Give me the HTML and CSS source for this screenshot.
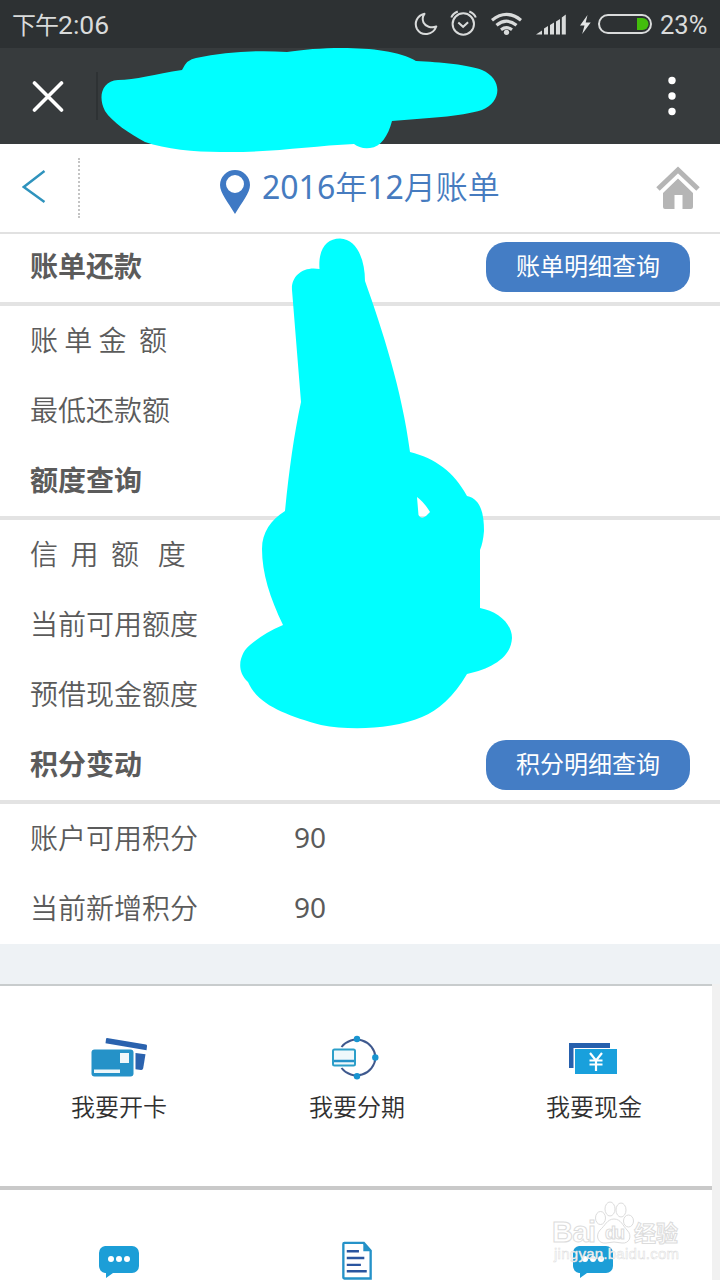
FILE: index.html
```html
<!DOCTYPE html>
<html lang="zh-CN">
<head>
<meta charset="utf-8">
<title>账单</title>
<link rel="stylesheet" href="styles.css">
</head>
<body>
<div class="screen">
  <header class="status">
    <div class="clock"><span class="ampm">下午</span>2:06</div>
    <svg class="status-icons" width="246" height="48" viewBox="410 0 246 48" fill="none" stroke="#d9dbdb" stroke-width="2">
      <path d="M424.500 13.800C417 15.500 413.800 23 417 29C421.500 36.500 433 35.500 436.300 26.500C431 28.500 425.500 26.500 423.500 22.500C422.200 19.500 422.500 16.500 424.500 13.800Z" stroke-linejoin="round"/>
      <circle cx="463.300" cy="24" r="10.700"/>
      <path d="M458.300 22.500l4.800 4.300l5-4.600M451.300 17.500q1.500-4 6.500-6M475.800 17.500q-1.500-4-6.500-6"/>
      <g stroke-width="3.200"><path d="M492 20.200q14.500-11.500 29 0M496.500 25.200q10-8 20 0M501 29.700q5.500-4 11 0"/></g>
      <circle cx="506.500" cy="32.300" r="2.600" fill="#d9dbdb" stroke="none"/>
      <path d="M536 34.500l6-4v4zM544 28.500l4-2.500v8.500h-4zM550 25l4-2.500v12h-4zM556 21.500l4-2.500v15.500h-4zM561.800 17.500l4-3v20h-4z" fill="#d9dbdb" stroke="none"/>
      <path d="M587.500 15l-7.500 10.500h4.500l-2.300 8.500l8.500-11.500h-5z" fill="#e4e6e6" stroke="none"/>
      <rect x="599" y="15" width="52" height="18" rx="9"/>
      <path d="M637 18h5.500a6 6 0 0 1 0 12h-5.500z" fill="#43bd0c" stroke="none"/>
    </svg>
    <div class="percent">23%</div>
  </header>

  <div class="titlebar">
    <svg class="close" width="32" height="32" viewBox="0 0 32 32" stroke="#fff" stroke-width="3.600" stroke-linecap="round"><path d="M2.500 3L29.500 30M29.500 3L2.500 30"/></svg>
    <i class="title-divider"></i>
    <svg class="more" width="8" height="40" viewBox="0 0 8 40" fill="#fff"><circle cx="4" cy="4.500" r="3.700"/><circle cx="4" cy="20" r="3.700"/><circle cx="4" cy="35.500" r="3.700"/></svg>
  </div>

  <nav class="nav">
    <svg class="back" width="24" height="34" viewBox="0 0 24 34" fill="none" stroke="#2f93bd" stroke-width="2.400"><path d="M22.500 1L1.800 17L22.500 32"/></svg>
    <i class="nav-divider"></i>
    <div class="nav-title">
      <svg width="30" height="44" viewBox="0 0 30 44"><path fill="#3f79c4" fill-rule="evenodd" d="M15 0a15 15 0 0 1 15 15c0 8-8 17-15 29C8 32 0 23 0 15A15 15 0 0 1 15 0zM15 5a9 9 0 1 0 0 18a9 9 0 0 0 0-18z"/></svg>
      <span class="month"><b>2016</b>年<b>12</b>月账单</span>
    </div>
    <svg class="home" width="44" height="44" viewBox="0 0 44 44"><path d="M2 23L22 4L42 23" fill="none" stroke="#b5b5b5" stroke-width="5"/><path d="M22 12.500L37 27v14q0 2-2 2h-8.500V29h-8v14H9q-2 0-2-2V27z" fill="#b5b5b5"/></svg>
  </nav>

  <main class="bill">
    <section>
      <h2 class="head head-first"><span>账单还款</span><a class="button">账单明细查询</a></h2>
      <div class="row"><span class="label">账 单 金&nbsp; 额</span></div>
      <div class="row"><span class="label">最低还款额</span></div>
    </section>
    <section>
      <h2 class="head"><span>额度查询</span></h2>
      <div class="row"><span class="label">信&nbsp; 用&nbsp; 额&nbsp;&nbsp; 度</span></div>
      <div class="row"><span class="label">当前可用额度</span></div>
      <div class="row"><span class="label">预借现金额度</span></div>
    </section>
    <section>
      <h2 class="head"><span>积分变动</span><a class="button">积分明细查询</a></h2>
      <div class="row"><span class="label">账户可用积分</span><span class="value">90</span></div>
      <div class="row"><span class="label">当前新增积分</span><span class="value">90</span></div>
    </section>
  </main>

  <div class="band"></div>

  <div class="menu">
    <div class="item">
      <svg width="60" height="50" viewBox="89 1030 60 50"><path d="M107 1038l39 6.500q1.200.3 1 1.800l-.5 4l-41-7l.5-4q.2-1.400 1-1.300z" fill="#2a62ae"/><path d="M135.500 1053l10 1.300l-2.300 14q-.4 2-2.200 1.800l-5.500-.8z" fill="#2a62ae"/><rect x="91.500" y="1049.500" width="42" height="27" rx="3" fill="#2592c8"/><path d="M120 1053h9v10h-9zM94 1069.500h26v3.500H94z" fill="#eef7fa"/></svg>
      <span>我要开卡</span>
    </div>
    <div class="item">
      <svg width="60" height="50" viewBox="327 1030 60 50" fill="none"><path d="M341.500 1047A19 19 0 0 1 375.500 1057.500A19 19 0 0 1 341.500 1068" stroke="#3f598e" stroke-width="2"/><rect x="333" y="1049.500" width="22" height="16" rx="1.500" fill="#eff8fb" stroke="#2c9fc9" stroke-width="2"/><path d="M334 1061h20" stroke="#2592c8" stroke-width="2.500"/><g fill="#1894d0"><circle cx="357" cy="1039" r="3.200"/><circle cx="375.300" cy="1057.500" r="3.200"/><circle cx="357" cy="1076.200" r="3.200"/></g></svg>
      <span>我要分期</span>
    </div>
    <div class="item">
      <svg width="60" height="50" viewBox="564 1030 60 50"><path d="M569 1043h41v5h-36.500v20H569z" fill="#2660ad"/><path d="M575 1049h42v25h-42z" fill="#19a0dc"/><path d="M590 1053l6 7.500l6-7.500M589.500 1060.500h13M589.500 1064.500h13M596 1060v11" fill="none" stroke="#fff" stroke-width="2.200"/></svg>
      <span>我要现金</span>
    </div>
    <div class="item second">
      <svg width="42" height="34" viewBox="0 0 42 34"><path d="M7 1h27a7 7 0 0 1 7 7v13a7 7 0 0 1-7 7H15l-7 5v-5H7a7 7 0 0 1-6-7V8a7 7 0 0 1 6-7z" fill="#1c9ed7"/><g fill="#fff"><circle cx="13" cy="14" r="3"/><circle cx="21" cy="14" r="3"/><circle cx="29" cy="14" r="3"/></g></svg>
    </div>
    <div class="item second">
      <svg class="doc" width="32" height="40" viewBox="0 0 32 40"><path d="M3 2h20l7 8v28.500H3q-1 0-1-1V3q0-1 1-1z" fill="#fff" stroke="#2592c8" stroke-width="2.400"/><path d="M22.500 1.500v9H31z" fill="#2592c8"/><path d="M5.500 10.500H18M5.500 17.500h18M5.500 24.500h14.500M5.500 31h20.500" stroke="#2a559f" stroke-width="2.500"/></svg>
    </div>
    <div class="item second last">
      <svg width="42" height="34" viewBox="0 0 42 34"><path d="M7 1h27a7 7 0 0 1 7 7v13a7 7 0 0 1-7 7H15l-7 5v-5H7a7 7 0 0 1-6-7V8a7 7 0 0 1 6-7z" fill="#1c9ed7"/><g fill="#fff"><circle cx="13" cy="14" r="3"/><circle cx="21" cy="14" r="3"/><circle cx="29" cy="14" r="3"/></g></svg>
    </div>
  </div>

  <svg class="overlay" width="720" height="1280" viewBox="0 0 720 1280">
    <g fill="#0ff">
      <path d="M118 80C135 80 155 74 182 70Q187 59 196 58C225 52 255 50 287 52C325 46 390 45 416 61C440 62 470 65 482 70C503 79 502 102 482 110C460 117 425 118 392 121C388 136 381 147 370 148Q360 149 354 144C310 146 270 153 220 152C195 152 165 149 145 142C130 134 112 122 105 111C98 98 101 81 118 80Z"/>
      <path fill-rule="evenodd" d="M319.500 269C318 250 326 238.500 340 238.500C357 239 365 260 365 281C382 329 402 390 410 452C435 458 454 472 467 496C481 499 484 514 484 531Q483 543 480 550V608C497 611 512 623 512 638C511 657 493 668 467 674C454 696 438 711 422 717C393 729 352 731 321 725C286 715 258 705 248 682C233 668 243 650 250 645Q264 633 283 625C270 598 262 573 262 549C262 532 271 520 285 511C289 470 294 435 301 402L292 290C291 276 303 266 319.500 269ZM417 497L418.500 515Q421 520 426 516L430 512Q424 502 417 497Z"/>
    </g>
    <g class="watermark">
      <g><ellipse cx="600.500" cy="1218" rx="5" ry="6.500"/><ellipse cx="610" cy="1209" rx="5" ry="7"/><ellipse cx="621" cy="1210" rx="5" ry="7"/><ellipse cx="628.500" cy="1221" rx="5" ry="6"/><path d="M614 1219c7 0 9 7 13 11c6 6 2 14-5 13q-8-2-16 0c-8 1-11-7-6-13c5-4 7-11 14-11z"/></g>
      <text class="wm-baidu" x="552" y="1242" textLength="44">Bai</text>
      <text class="wm-du" x="605" y="1239" textLength="20">du</text>
      <text class="wm-cn" x="634" y="1241" textLength="44">经验</text>
      <text class="wm-url" x="554" y="1259" textLength="125">jingyan.baidu.com</text>
    </g>
  </svg>
</div>
</body>
</html>
```
FILE: styles.css
```css
* { box-sizing: border-box; }
body { margin: 0; font-family: "Noto Sans", "Noto Sans CJK SC", sans-serif; background: #f1f1f1; }
.screen { position: relative; width: 720px; height: 1280px; overflow: hidden; color: #5b5b5b; }

.status { height: 48px; display: flex; align-items: center; background: #2d3133; color: #d9dbdb; font-family: Roboto, "Noto Sans CJK SC", sans-serif; font-size: 26.5px; line-height: 48px; }
.clock { width: 410px; padding-left: 12px; padding-top: 2px; }
.ampm { font-size: 24px; letter-spacing: -1px; }
.percent { padding-left: 4px; padding-top: 1px; font-size: 25.500px; }

.titlebar { height: 96px; display: flex; align-items: center; padding: 0 44px 0 32px; background: #373b3d; }
.title-divider { width: 2px; height: 48px; margin-left: 32px; background: #2e3234; }
.more { margin-left: auto; }

.nav { height: 90px; display: flex; align-items: center; padding: 0 20px 0 22px; background: #fff; border-bottom: 2px solid #e1e1e1; }
.back { margin-bottom: 3px; }
.nav-divider { height: 60px; margin-left: 32px; border-left: 2px dotted #c4c4c4; }
.nav-title { display: flex; align-items: center; gap: 12px; margin-left: 140px; color: #467bbf; font-size: 32px; line-height: 44px; padding-top: 7px; }
.month { margin-top: -9px; font-weight: 350; white-space: nowrap; }
.month b { font-weight: 400; }
.home { margin-left: auto; }

.bill { background: #fff; font-family: "Noto Sans CJK SC", sans-serif; font-size: 28px; }
.head { display: flex; align-items: center; justify-content: space-between; height: 74px; margin: 0; padding: 0 30px; border-bottom: 4px solid #e3e3e3; font-size: 28px; line-height: 40px; font-weight: 700; }
.head > span { padding-bottom: 4px; }
.head-first { height: 72px; padding-bottom: 2px; }
.button { width: 204px; height: 50px; border-radius: 20px; background: #447dc5; color: #fff; font-size: 24px; line-height: 45px; font-weight: 400; text-align: center; }
.row { display: flex; align-items: center; height: 70px; padding: 0 30px 4px; line-height: 40px; font-weight: 350; }
.label { width: 264px; }
.value { font-family: "Noto Sans", sans-serif; font-weight: 400; }

.band { height: 40px; background: #eef2f5; }

.menu { display: grid; grid-template-columns: 238px 238px 236px; grid-template-rows: 204px 90px; width: 712px; border-top: 2px solid #c8cccd; background: #fff; color: #303030; }
.item { display: flex; flex-direction: column; align-items: center; gap: 10px; padding-top: 44px; border-bottom: 4px solid #c9c9c9; font-family: "Noto Sans CJK SC", sans-serif; font-size: 24px; line-height: 32px; font-weight: 350; }
.second { padding-top: 55px; border-bottom: 0; }
.last { padding-right: 3px; }
.doc { margin-top: -4px; }

/* Scribble and site mark drawn over the page */
.overlay { position: absolute; top: 0; left: 0; }
.watermark { fill: #fff; stroke: #dcdcdc; stroke-width: 1; }
.watermark text { font-family: "Liberation Sans", "Noto Sans CJK SC", sans-serif; }
.wm-baidu { font-size: 29px; font-weight: 700; }
.wm-du { font-size: 18px; font-weight: 700; }
.wm-cn { font-size: 22px; font-weight: 700; }
.watermark .wm-url { font-size: 15px; stroke-width: 0.5px; }
```
